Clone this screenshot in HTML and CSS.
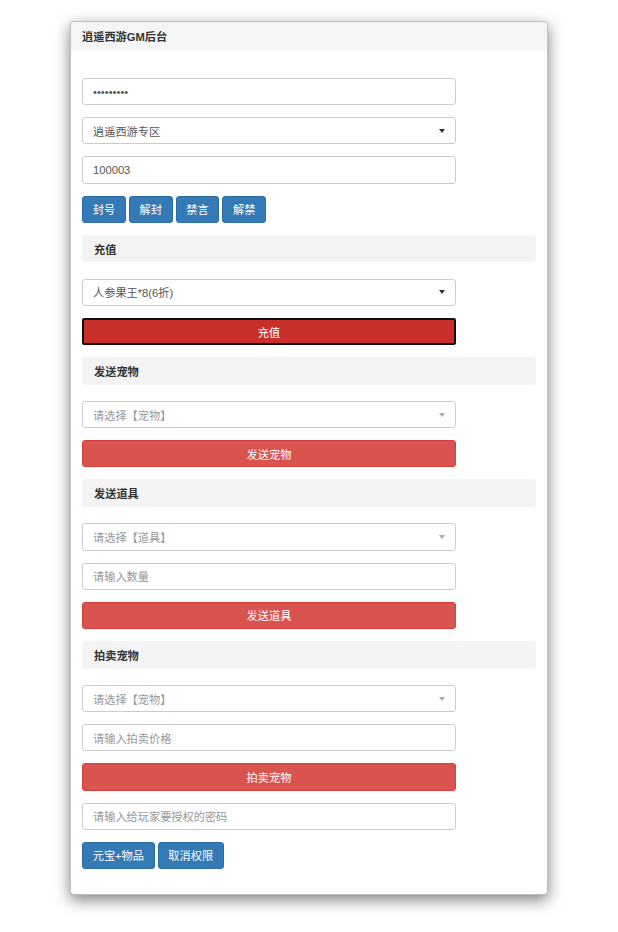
FILE: index.html
```html
<!DOCTYPE html>
<html lang="zh-CN">
<head>
<meta charset="utf-8">
<title>逍遥西游GM后台</title>
<link rel="stylesheet" href="styles.css">
</head>
<body>
<div class="card">
  <div class="card-header">逍遥西游GM后台</div>
  <div class="card-body">
    <div class="field"><span class="dots">•••••••••</span></div>
    <div class="field select"><span>逍遥西游专区</span><span class="caret"></span></div>
    <div class="field"><span>100003</span></div>
    <div class="btn-row">
      <button class="btn btn-primary">封号</button>
      <button class="btn btn-primary">解封</button>
      <button class="btn btn-primary">禁言</button>
      <button class="btn btn-primary">解禁</button>
    </div>

    <div class="section">充值</div>
    <div class="field select"><span>人参果王*8(6折)</span><span class="caret"></span></div>
    <button class="btn btn-block btn-danger active">充值</button>

    <div class="section">发送宠物</div>
    <div class="field select placeholder"><span>请选择【宠物】</span><span class="caret"></span></div>
    <button class="btn btn-block btn-danger">发送宠物</button>

    <div class="section">发送道具</div>
    <div class="field select placeholder"><span>请选择【道具】</span><span class="caret"></span></div>
    <div class="field placeholder"><span>请输入数量</span></div>
    <button class="btn btn-block btn-danger">发送道具</button>

    <div class="section">拍卖宠物</div>
    <div class="field select placeholder"><span>请选择【宠物】</span><span class="caret"></span></div>
    <div class="field placeholder"><span>请输入拍卖价格</span></div>
    <button class="btn btn-block btn-danger">拍卖宠物</button>

    <div class="field placeholder"><span>请输入给玩家要授权的密码</span></div>
    <div class="btn-row">
      <button class="btn btn-primary">元宝+物品</button>
      <button class="btn btn-primary">取消权限</button>
    </div>
  </div>
</div>
</body>
</html>
```
FILE: styles.css
```css
html, body {
  margin: 0;
  padding: 0;
  background: #ffffff;
}

body {
  font-family: "Liberation Sans", "Noto Sans CJK SC", sans-serif;
  font-size: 11.2px;
  color: #333333;
  padding-bottom: 38px;
}

.card {
  box-sizing: border-box;
  width: 478px;
  margin: 21px auto 0;
  border: 1px solid rgba(0, 0, 0, 0.25);
  border-radius: 4px;
  background: #ffffff;
  box-shadow: 0 5px 15px rgba(0, 0, 0, 0.5);
  overflow: hidden;
}

.card-header {
  height: 28px;
  display: flex;
  align-items: center;
  padding: 0 11px;
  background: #f5f5f5;
  font-weight: bold;
  color: #333333;
}

.card-body {
  display: flex;
  flex-direction: column;
  align-items: flex-start;
  gap: 12px;
  padding: 28px 11px 25.5px;
}

.field {
  box-sizing: border-box;
  width: 374px;
  height: 27.2px;
  display: flex;
  align-items: center;
  justify-content: space-between;
  padding: 0 10px;
  border: 1px solid #cccccc;
  border-radius: 3px;
  background: #ffffff;
  color: #555555;
}

.field.placeholder {
  color: #999999;
}

.dots {
  color: #555555;
}

.caret {
  width: 0;
  height: 0;
  border-left: 3px solid transparent;
  border-right: 3px solid transparent;
  border-top: 4px solid #333333;
}

.placeholder .caret {
  border-top-color: #aaaaaa;
}

.btn-row {
  display: flex;
  gap: 3px;
}

.btn {
  box-sizing: border-box;
  height: 27.2px;
  padding: 0 9.7px;
  border: 1px solid transparent;
  border-radius: 3px;
  font-family: inherit;
  font-size: 11.2px;
  color: #ffffff;
  cursor: pointer;
}

.btn-primary {
  background: #337ab7;
  border-color: #2e6da4;
}

.btn-danger {
  background: #d9534f;
  border-color: #d43f3a;
}

.btn-danger.active {
  background: #c9302c;
  border: 2px solid #111111;
  border-radius: 2px;
}

.btn-block {
  width: 374px;
  padding: 0;
}

.section {
  box-sizing: border-box;
  align-self: stretch;
  height: 27.6px;
  margin-bottom: 4.4px;
  display: flex;
  align-items: center;
  padding: 0 12px;
  background: #f4f4f4;
  border-radius: 4px;
  font-weight: bold;
  color: #333333;
}
```
